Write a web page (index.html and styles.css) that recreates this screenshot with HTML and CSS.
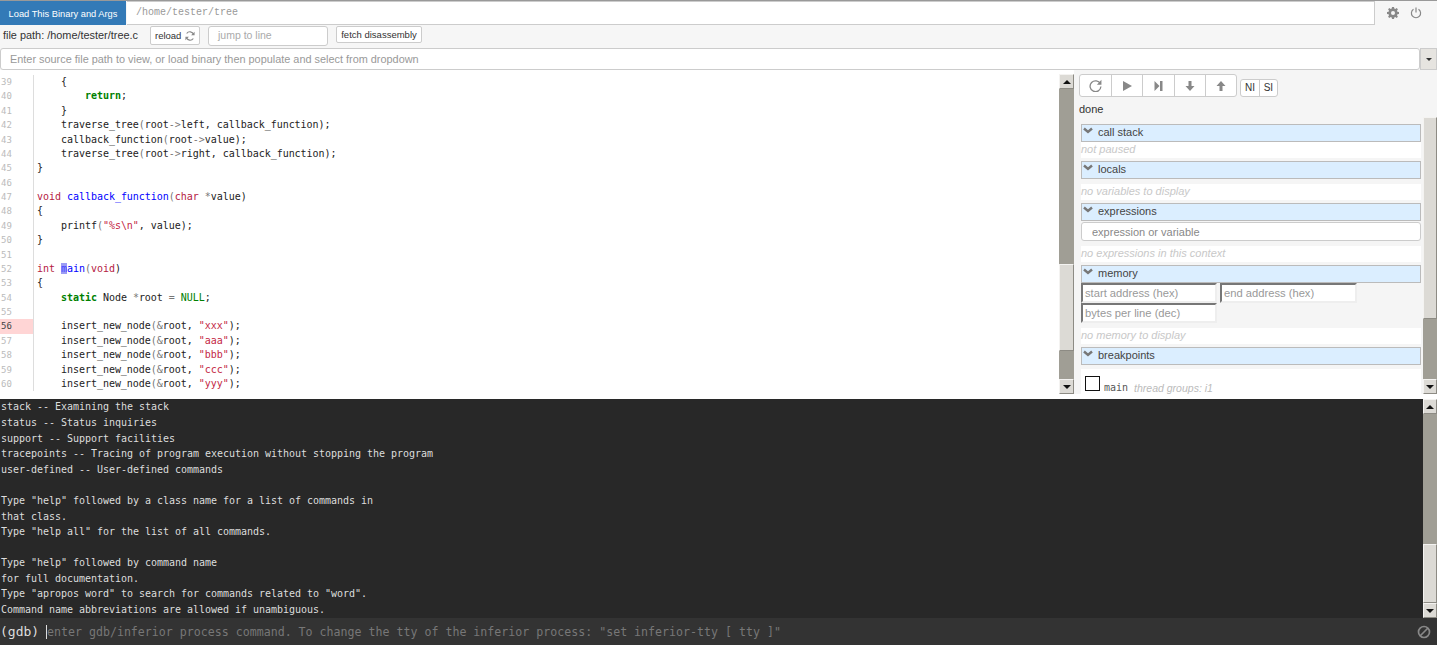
FILE: index.html
```html
<!DOCTYPE html>
<html lang="en">
<head>
<meta charset="utf-8">
<title>gdbgui</title>
<link rel="stylesheet" href="styles.css">
</head>
<body>
<div class="app">
  <header class="top">
    <div class="binary-row">
      <button class="load-btn">Load This Binary and Args</button>
      <div class="binary-input">/home/tester/tree</div>
      <div class="top-icons">
        <svg class="ico-gear" viewBox="0 0 12 12"><path fill="#888" d="M5 0h2l.3 1.6 1 .4L9.700 1.100l1.200 1.200L10 3.700l.4 1L12 5v2l-1.600.3-.4 1 .9 1.400-1.200 1.200L8.300 10l-1 .4L7 12H5l-.3-1.600-1-.4-1.400.9-1.200-1.200L2 8.300l-.4-1L0 7V5l1.600-.3.4-1-.9-1.400 1.200-1.200L3.700 2l1-.4z"/><circle cx="6" cy="6" r="2" fill="#f5f5f5"/></svg>
        <svg class="ico-power" viewBox="0 0 12 12"><path fill="none" stroke="#888" stroke-width="1.200" d="M3.500 2.300a4.600 4.600 0 1 0 5 0M6 .5v5"/></svg>
      </div>
    </div>
    <div class="file-row">
      <span class="file-path">file path: /home/tester/tree.c</span>
      <button class="btn reload">reload
        <svg class="ico-reload" viewBox="0 0 12 12"><path fill="none" stroke="#888" stroke-width="1.300" d="M10.300 4.200A4.700 4.700 0 0 0 2 3M1.700 7.800A4.700 4.700 0 0 0 10 9"/><path fill="#888" d="M11.500 .8v4.200H7.300zM.5 11.200V7h4.200z"/></svg>
      </button>
      <div class="jump">jump to line</div>
      <button class="btn fetch">fetch disassembly</button>
    </div>
    <div class="source-row">
      <div class="source-input">Enter source file path to view, or load binary then populate and select from dropdown</div>
      <div class="dropdown"><i class="caret-down"></i></div>
    </div>
  </header>

  <main class="middle">
    <section class="code">
      <div class="r"><span class="n">39</span><code>    {</code></div>
      <div class="r"><span class="n">40</span><code>        <b class="k">return</b>;</code></div>
      <div class="r"><span class="n">41</span><code>    }</code></div>
      <div class="r"><span class="n">42</span><code>    traverse_tree<i class="o">(</i>root<i class="o">-&gt;</i>left, callback_function);</code></div>
      <div class="r"><span class="n">43</span><code>    callback_function<i class="o">(</i>root<i class="o">-&gt;</i>value);</code></div>
      <div class="r"><span class="n">44</span><code>    traverse_tree<i class="o">(</i>root<i class="o">-&gt;</i>right, callback_function);</code></div>
      <div class="r"><span class="n">45</span><code>}</code></div>
      <div class="r"><span class="n">46</span><code></code></div>
      <div class="r"><span class="n">47</span><code><i class="t">void</i> <i class="f">callback_function</i><i class="o">(</i><i class="t">char</i> <i class="o">*</i>value)</code></div>
      <div class="r"><span class="n">48</span><code>{</code></div>
      <div class="r"><span class="n">49</span><code>    printf<i class="o">(</i><i class="s">"%s\n"</i>, value);</code></div>
      <div class="r"><span class="n">50</span><code>}</code></div>
      <div class="r"><span class="n">51</span><code></code></div>
      <div class="r"><span class="n">52</span><code><i class="t">int</i> <i class="f"><i class="hl">m</i>ain</i><i class="o">(</i><i class="t">void</i>)</code></div>
      <div class="r"><span class="n">53</span><code>{</code></div>
      <div class="r"><span class="n">54</span><code>    <b class="k">static</b> Node <i class="o">*</i>root <i class="o">=</i> <i class="b">NULL</i>;</code></div>
      <div class="r"><span class="n">55</span><code></code></div>
      <div class="r"><span class="n bp">56</span><code>    insert_new_node<i class="o">(&amp;</i>root, <i class="s">"xxx"</i>);</code></div>
      <div class="r"><span class="n">57</span><code>    insert_new_node<i class="o">(&amp;</i>root, <i class="s">"aaa"</i>);</code></div>
      <div class="r"><span class="n">58</span><code>    insert_new_node<i class="o">(&amp;</i>root, <i class="s">"bbb"</i>);</code></div>
      <div class="r"><span class="n">59</span><code>    insert_new_node<i class="o">(&amp;</i>root, <i class="s">"ccc"</i>);</code></div>
      <div class="r"><span class="n">60</span><code>    insert_new_node<i class="o">(&amp;</i>root, <i class="s">"yyy"</i>);</code></div>
    </section>

    <div class="sb sb-code">
      <div class="arrow"><i class="tri-up"></i></div>
      <div class="track t-code-a"></div>
      <div class="thumb th-code"></div>
      <div class="track grow"></div>
      <div class="arrow"><i class="tri-down"></i></div>
    </div>

    <aside class="side">
      <div class="toolbar">
        <div class="group">
          <div class="tb"><svg class="ico-reload big" viewBox="0 0 12 12"><path fill="none" stroke="#888" stroke-width="1.200" d="M10.500 4.500A5 5 0 1 0 11 7"/><path fill="#888" d="M11.500 .8v4.400H7.300z"/></svg></div>
          <div class="tb"><svg class="ico" viewBox="0 0 12 12"><path fill="#888" d="M2 1l9 5-9 5z"/></svg></div>
          <div class="tb"><svg class="ico" viewBox="0 0 12 12"><path fill="#888" d="M2.500 1l5 5-5 5zM8 1h2.500v10H8z"/></svg></div>
          <div class="tb"><svg class="ico" viewBox="0 0 12 12"><path fill="#888" d="M4.500 1h3v5H10.500L6 11 1.500 6h3z"/></svg></div>
          <div class="tb"><svg class="ico" viewBox="0 0 12 12"><path fill="#888" d="M4.500 11h3V6H10.500L6 1 1.500 6h3z"/></svg></div>
        </div>
        <div class="group small"><div class="sm">NI</div><div class="sm">SI</div></div>
      </div>
      <div class="status">done</div>
      <div class="panels">
        <h4 class="hd first"><svg class="chev" viewBox="0 0 10 8"><path fill="none" stroke="#777" stroke-width="2.400" d="M1 1.500l4 3.500 4-3.500"/></svg>call stack</h4>
        <div class="empty e1">not paused</div>
        <h4 class="hd"><svg class="chev" viewBox="0 0 10 8"><path fill="none" stroke="#777" stroke-width="2.400" d="M1 1.500l4 3.500 4-3.500"/></svg>locals</h4>
        <div class="empty e2">no variables to display</div>
        <h4 class="hd"><svg class="chev" viewBox="0 0 10 8"><path fill="none" stroke="#777" stroke-width="2.400" d="M1 1.500l4 3.500 4-3.500"/></svg>expressions</h4>
        <div class="expr"><span>expression or variable</span></div>
        <div class="empty e2">no expressions in this context</div>
        <h4 class="hd"><svg class="chev" viewBox="0 0 10 8"><path fill="none" stroke="#777" stroke-width="2.400" d="M1 1.500l4 3.500 4-3.500"/></svg>memory</h4>
        <div class="mem">
          <div class="inset">start address (hex)</div>
          <div class="inset">end address (hex)</div>
          <div class="inset">bytes per line (dec)</div>
        </div>
        <div class="empty e2">no memory to display</div>
        <h4 class="hd"><svg class="chev" viewBox="0 0 10 8"><path fill="none" stroke="#777" stroke-width="2.400" d="M1 1.500l4 3.500 4-3.500"/></svg>breakpoints</h4>
        <div class="bps"><span class="check"></span><span class="bp-name">main</span><em>thread groups: i1</em></div>
      </div>
    </aside>

    <div class="sb-col">
      <div class="sb-gap"></div>
      <div class="sb sb-side">
        <div class="thumb th-side"></div>
        <div class="track grow"></div>
        <div class="arrow"><i class="tri-down"></i></div>
      </div>
    </div>
  </main>

  <section class="terminal">
    <div class="output">
      <div>stack -- Examining the stack</div>
      <div>status -- Status inquiries</div>
      <div>support -- Support facilities</div>
      <div>tracepoints -- Tracing of program execution without stopping the program</div>
      <div>user-defined -- User-defined commands</div>
      <div class="blank"></div>
      <div>Type "help" followed by a class name for a list of commands in</div>
      <div>that class.</div>
      <div class="tight">Type "help all" for the list of all commands.</div>
      <div class="blank"></div>
      <div>Type "help" followed by command name</div>
      <div>for full documentation.</div>
      <div>Type "apropos word" to search for commands related to "word".</div>
      <div>Command name abbreviations are allowed if unambiguous.</div>
    </div>
    <div class="sb sb-term">
      <div class="arrow"><i class="tri-up"></i></div>
      <div class="track grow"></div>
      <div class="thumb th-term"></div>
      <div class="arrow"><i class="tri-down"></i></div>
    </div>
  </section>

  <footer class="cmd">
    <span class="prompt">(gdb)</span>
    <span class="cursor"></span>
    <span class="ph">enter gdb/inferior process command. To change the tty of the inferior process: "set inferior-tty [ tty ]"</span>
    <svg class="ban" viewBox="0 0 14 14"><circle cx="7" cy="7" r="5.500" fill="none" stroke="#888" stroke-width="1.700"/><path stroke="#888" stroke-width="1.700" d="M3 11L11 3"/></svg>
  </footer>
</div>
</body>
</html>
```

FILE: styles.css
```css
* { box-sizing: border-box; }
html, body { margin: 0; height: 100%; }
body { font-family: "Liberation Sans", Arial, sans-serif; font-size: 11px; color: #333; background: #f5f5f5; overflow: hidden; }
.app { width: 1437px; height: 645px; display: flex; flex-direction: column; border-top: 1px solid #999; opacity: .999; }
i, em { font-style: normal; }

.top { background: #f6f6f6; }
.binary-row { display: flex; height: 24px; }
.load-btn { width: 126px; border: 0; background: #337ab7; color: #fff; font: 9.300px "Liberation Sans", Arial, sans-serif; padding: 1px 0 0; }
.binary-input { width: 1248px; margin-left: 1px; background: #fff; border: 1px solid #ccc; border-left: 0; font: 10px/21px "Liberation Mono", monospace; color: #999; padding-left: 9px; }
.top-icons { flex: 1; display: flex; align-items: center; gap: 11px; padding-left: 12px; }
.ico-gear { width: 12px; height: 12px; }
.ico-power { width: 12px; height: 12px; }

.file-row { display: flex; align-items: flex-start; height: 23px; padding-top: 1px; font-size: 10.900px; }
.file-path { width: 150px; padding-left: 3px; line-height: 19px; color: #333; }
.btn { background: #fff; border: 1px solid #ccc; border-radius: 2px; font: 9.500px "Liberation Sans", Arial, sans-serif; color: #333; padding: 0; }
.reload { width: 50px; height: 19px; display: flex; align-items: center; gap: 4px; padding-left: 4px; }
.ico-reload { width: 10px; height: 10px; }
.ico-reload.big { width: 13px; height: 13px; }
.jump { width: 120px; height: 20px; margin-left: 8px; background: #fff; border: 1px solid #ccc; border-radius: 3px; color: #aaa; font-size: 10.500px; line-height: 17px; padding-left: 9px; }
.fetch { width: 86px; height: 17px; margin-left: 8px; }

.source-row { display: flex; height: 22px; }
.source-input { width: 1420px; height: 22px; background: #fff; border: 1px solid #ccc; border-radius: 3px; color: #999; font-size: 10.900px; line-height: 20px; padding-left: 9px; }
.dropdown { flex: 1; height: 22px; background: #e6e4e0; border: 1px solid #ccc; display: flex; align-items: center; justify-content: center; }
.caret-down { border: 3px solid transparent; border-top: 3px solid #333; border-bottom: 0; }

.middle { display: flex; height: 329px; background: #fff; }
.code { width: 1059px; padding-top: 5px; background: #fff; overflow: hidden; }
.r { display: flex; height: 14.380px; }
.n { width: 34px; flex: none; border-right: 1px solid #ddd; font: 9px/14.380px "DejaVu Sans Mono", monospace; color: #bbb; padding-left: 1px; }
.n.bp { background: #ffd5d5; color: #444; }
code { font: 10px/14.380px "DejaVu Sans Mono", monospace; letter-spacing: -.03px; color: #222; white-space: pre; padding-left: 3px; }
.k { color: #008000; font-weight: 700; }
.t { color: #b5203f; }
.f { color: #0000ff; }
.hl { background: #9c9cf5; color: #44f; }
.s { color: #c42745; }
.o { color: #777; }
.b { color: #008000; }

.sb { display: flex; flex-direction: column; background: #a09e95; }
.sb-code { width: 15px; height: 320px; margin-top: 4px; }
.sb-col { width: 14px; display: flex; flex-direction: column; }
.sb-gap { height: 47px; flex: none; background: #f5f5f5; }
.sb-side { width: 14px; height: 277px; }
.arrow { height: 15px; flex: none; background: #dcdad5; border: 1px solid #f4f3f1; border-right-color: #8d8b84; border-bottom-color: #8d8b84; display: flex; align-items: center; justify-content: center; }
.tri-up { border: 4px solid transparent; border-bottom: 4px solid #111; border-top: 0; }
.tri-down { border: 4px solid transparent; border-top: 4px solid #111; border-bottom: 0; }
.track { flex: none; }
.grow { flex: 1; }
.t-code-a { height: 175px; }
.thumb { flex: none; background: #dcdad5; border: 1px solid #f4f3f1; border-right-color: #8d8b84; border-bottom-color: #8d8b84; }
.th-code { height: 87px; }
.th-side { height: 202px; }
.th-term { height: 59px; }

.side { width: 349px; height: 324px; display: flex; flex-direction: column; background: #f5f5f5; overflow: hidden; }
.toolbar { display: flex; align-items: flex-end; height: 27px; padding: 4px 0 0 5px; gap: 3px; }
.group { display: flex; height: 23px; background: #fff; border: 1px solid #ccc; border-radius: 3px; }
.tb { width: 31.200px; display: flex; align-items: center; justify-content: center; border-left: 1px solid #ccc; }
.tb:first-child { border-left: 0; }
.ico { width: 12px; height: 12px; }
.small { height: 18px; }
.sm { width: 18px; text-align: center; font-size: 10px; line-height: 16px; border-left: 1px solid #ccc; }
.sm:first-child { border-left: 0; }
.status { height: 20px; line-height: 20px; padding: 2px 0 0 5px; font-size: 11px; color: #333; }
.panels { flex: 1; padding: 7px 2px 0 7px; overflow: hidden; }
.hd { display: flex; align-items: center; margin: 0; height: 18px; background: #dbeeff; border: 1px solid #bbb; font-size: 11px; font-weight: 400; color: #444; padding: 0 0 2px 1px; }
.chev { width: 10px; height: 8px; margin: -3px 5px 0 0; flex: none; }
.empty { background: #fff; color: #c8c8c8; font-style: italic; font-size: 11px; height: 16px; line-height: 15px; margin-bottom: 3px; }
.e2 { margin-top: 5px; }
.expr { height: 19px; margin-top: 1px; background: #fff; border: 1px solid #ccc; border-radius: 3px; padding-left: 10px; font-size: 11px; color: #888; overflow: hidden; }
.expr span { display: block; height: 12px; margin-top: 3px; line-height: 13px; overflow: hidden; }
.mem { display: flex; flex-wrap: wrap; column-gap: 3px; }
.inset { width: 136px; height: 20px; background: #fff; border: 2px solid #eee; border-top-color: #777; border-left-color: #777; color: #999; font-size: 11.200px; line-height: 17px; padding-left: 2px; }
.mem .inset:nth-child(2) { width: 137px; }
.bps { margin-top: 4px; background: #fff; height: 40px; padding: 7px 0 0 4px; display: flex; align-items: flex-start; }
.check { width: 15px; height: 15px; background: #fff; border: 1px solid #111; flex: none; }
.bp-name { font: 10px/12px "DejaVu Sans Mono", monospace; color: #555; margin: 6px 6px 0 4px; }
.bps em { font-style: italic; font-size: 10.500px; line-height: 12px; margin-top: 6px; color: #bbb; }

.terminal { display: flex; height: 219px; background: #282828; }
.output { width: 1423px; font: 10px/15.800px "DejaVu Sans Mono", monospace; letter-spacing: -.02px; color: #ddd; padding-left: 1px; overflow: hidden; }
.blank { height: 15.500px; }
.tight { margin-top: -1.500px; }
.sb-term { width: 14px; height: 219px; }

.cmd { flex: 1; display: flex; align-items: center; background: #333; font-family: "DejaVu Sans Mono", monospace; }
.prompt { font-size: 13px; color: #ddd; width: 47px; flex: none; }
.cursor { width: 1px; height: 14px; background: #ddd; margin-left: -1px; flex: none; }
.ph { font-size: 11.620px; color: #777; }
.ban { width: 14px; height: 14px; margin-left: auto; margin-right: 6px; }
```
